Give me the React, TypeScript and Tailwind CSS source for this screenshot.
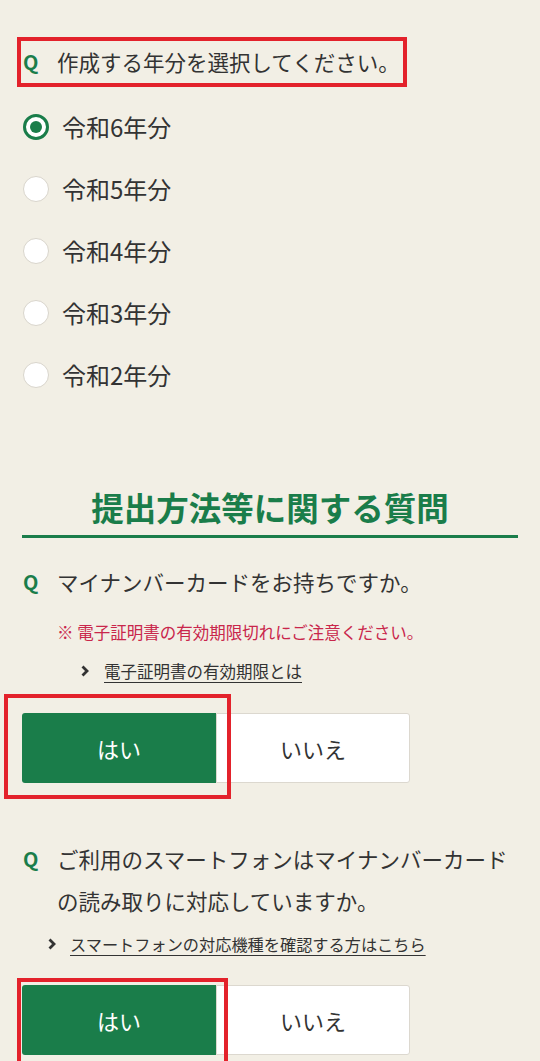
import {useState} from 'react';

const YEARS = ['令和6年分', '令和5年分', '令和4年分', '令和3年分', '令和2年分'];

const FONT = {fontFamily: '"Noto Sans CJK JP", "Noto Sans", sans-serif'};

function Chevron() {
  return (
    <svg width="10" height="12" viewBox="0 0 10 12" className="shrink-0">
      <path d="M2.5 1.5 L7 6 L2.5 10.5" fill="none" stroke="#333" strokeWidth="2.8" />
    </svg>
  );
}

function Radio({checked}: {checked: boolean}) {
  if (checked) {
    return (
      <span className="w-[26px] h-[26px] rounded-full border-[3px] border-[#1a7d4a] bg-white flex items-center justify-center shrink-0">
        <span className="w-[12px] h-[12px] rounded-full bg-[#1a7d4a]" />
      </span>
    );
  }
  return <span className="w-[26px] h-[26px] rounded-full border border-[#d9d5cc] bg-white shrink-0" />;
}

function YesNo({value, onChange}: {value: boolean; onChange: (v: boolean) => void}) {
  return (
    <div className="flex">
      <button
        onClick={() => onChange(true)}
        className={`w-[194px] h-[70px] rounded-l-[3px] text-[22px] ${
          value ? 'bg-[#1a7d4a] text-white' : 'bg-white text-[#333] border border-[#dcd8cf]'
        }`}>
        はい
      </button>
      <button
        onClick={() => onChange(false)}
        className={`w-[194px] h-[70px] rounded-r-[3px] text-[22px] ${
          !value ? 'bg-[#1a7d4a] text-white' : 'bg-white text-[#333] border border-[#dcd8cf]'
        }`}>
        いいえ
      </button>
    </div>
  );
}

export default function App() {
  const [year, setYear] = useState(0);
  const [hasCard, setHasCard] = useState(true);
  const [canRead, setCanRead] = useState(true);

  return (
    <div className="min-h-[1061px] bg-[#f2efe5] px-[22px] pt-[47px] text-[#333]" style={FONT}>
      {/* Year question */}
      <div className="relative flex items-center h-[30px]">
        <span className="w-[35px] pl-[1px] text-[20px] font-bold text-[#1a7d4a]">Q</span>
        <span className="text-[21.5px]">作成する年分を選択してください。</span>
        <div className="absolute left-[-5px] top-[-10px] w-[390px] h-[50px] border-4 border-[#e3222b]" />
      </div>

      <div className="mt-[19px]">
        {YEARS.map((label, i) => (
          <label
            key={label}
            onClick={() => setYear(i)}
            className="h-[62px] flex items-center gap-[13px] pl-[1px] cursor-pointer">
            <Radio checked={year === i} />
            <span className="text-[24px]">{label}</span>
          </label>
        ))}
      </div>

      {/* Section heading */}
      <div className="mt-[79px] border-b-[3px] border-[#1a7d4a] pb-[6px] text-center">
        <h2 className="text-[32.5px] leading-[44px] font-bold text-[#1a7d4a]">提出方法等に関する質問</h2>
      </div>

      {/* My Number card */}
      <div className="mt-[29px] flex items-center h-[30px]">
        <span className="w-[35px] pl-[1px] text-[20px] font-bold text-[#1a7d4a]">Q</span>
        <span className="text-[21.5px]">マイナンバーカードをお持ちですか。</span>
      </div>
      <p className="mt-[23px] ml-[35px] text-[16.5px] leading-[24px] text-[#c9264b]">
        ※ 電子証明書の有効期限切れにご注意ください。
      </p>
      <a className="mt-[15px] ml-[58px] flex items-center gap-[14px] h-[24px] text-[16.5px] underline underline-offset-4">
        <Chevron />
        電子証明書の有効期限とは
      </a>
      <div className="relative mt-[30px]">
        <YesNo value={hasCard} onChange={setHasCard} />
        <div className="absolute left-[-18px] top-[-19px] w-[227px] h-[105px] border-4 border-[#e3222b]" />
      </div>

      {/* Smartphone */}
      <div className="mt-[55px] flex">
        <span className="w-[35px] pl-[1px] text-[20px] leading-[42px] font-bold text-[#1a7d4a] shrink-0">Q</span>
        <span className="text-[21.5px] leading-[42px]">
          ご利用のスマートフォンはマイナンバーカードの読み取りに対応していますか。
        </span>
      </div>
      <a className="mt-[10px] ml-[25px] flex items-center gap-[13px] h-[24px] text-[16.2px] underline underline-offset-4">
        <Chevron />
        スマートフォンの対応機種を確認する方はこちら
      </a>
      <div className="relative mt-[29px]">
        <YesNo value={canRead} onChange={setCanRead} />
        <div className="absolute left-[-5px] top-[-7px] w-[211px] h-[90px] border-4 border-[#e3222b]" />
      </div>
    </div>
  );
}
